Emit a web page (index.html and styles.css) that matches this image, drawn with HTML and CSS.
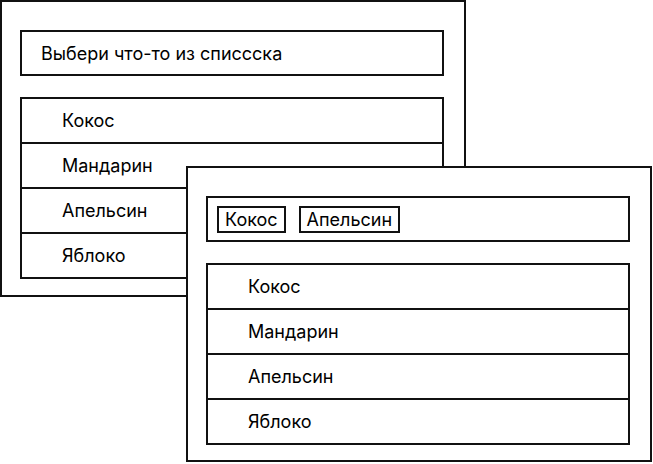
FILE: index.html
```html
<!DOCTYPE html>
<html lang="ru">
<head>
<meta charset="utf-8">
<link rel="stylesheet" href="styles.css">
</head>
<body>
<div class="window window-back">
  <div class="field"><span class="placeholder">Выбери что-то из списсска</span></div>
  <ul class="list">
    <li>Кокос</li>
    <li>Мандарин</li>
    <li>Апельсин</li>
    <li>Яблоко</li>
  </ul>
</div>
<div class="window window-front">
  <div class="field field-chips">
    <span class="chip">Кокос</span>
    <span class="chip">Апельсин</span>
  </div>
  <ul class="list">
    <li>Кокос</li>
    <li>Мандарин</li>
    <li>Апельсин</li>
    <li>Яблоко</li>
  </ul>
</div>
</body>
</html>
```
FILE: styles.css
```css
html, body {
  margin: 0;
  padding: 0;
  background: #fff;
}
body {
  position: relative;
  width: 653px;
  height: 464px;
  overflow: hidden;
  font-family: Inter, "Noto Sans", sans-serif;
  font-size: 18px;
  color: #000;
}
.window {
  position: absolute;
  box-sizing: border-box;
  width: 466px;
  height: 297px;
  border: 2px solid #111;
  background: #fff;
  padding: 28px 20px 0 18px;
  display: flex;
  flex-direction: column;
  gap: 21px;
}
.window-back {
  left: 0;
  top: 0;
}
.window-front {
  left: 186px;
  top: 166px;
  height: 296px;
}
.field {
  box-sizing: border-box;
  height: 46px;
  border: 2px solid #111;
  display: flex;
  align-items: center;
  padding-left: 19px;
}
.field-chips {
  padding-left: 9px;
  gap: 13px;
}
.chip {
  box-sizing: border-box;
  height: 27px;
  border: 2px solid #111;
  padding: 0 6px;
  display: flex;
  align-items: center;
}
.list {
  list-style: none;
  margin: 0;
  padding: 0;
  border: 2px solid #111;
}
.list li {
  box-sizing: border-box;
  height: 45px;
  display: flex;
  align-items: center;
  padding-left: 40px;
}
.list li + li {
  border-top: 2px solid #111;
}
.list li:first-child {
  height: 43px;
}
```
